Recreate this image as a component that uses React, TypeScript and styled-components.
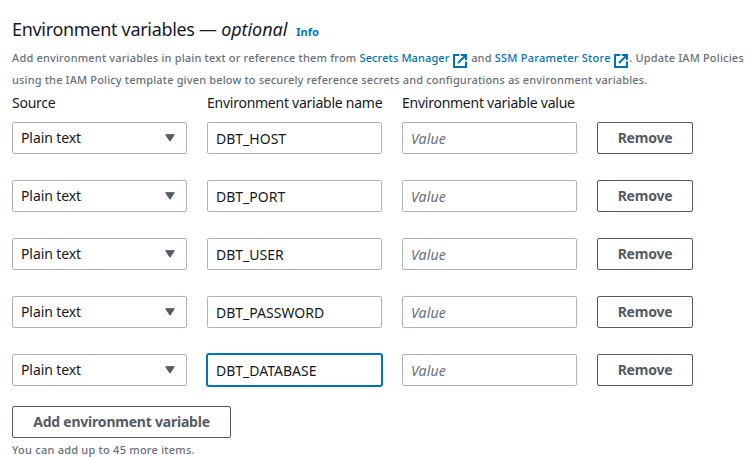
import React from 'react';
import styled, { createGlobalStyle, css } from 'styled-components';

const GlobalStyle = createGlobalStyle`
  *, *::before, *::after { box-sizing: border-box; }
  body {
    margin: 0;
    background: #fff;
    color: #16191f;
    font-family: "Noto Sans", "Open Sans", sans-serif;
    font-size: 14px;
    line-height: 22px;
  }
`;

const Page = styled.main`
  width: 755px;
  height: 457px;
  padding: 17px 0 0 12px;
  overflow: hidden;
`;

const Header = styled.header`
  display: flex;
  align-items: baseline;
  height: 24px;
`;

const Title = styled.h3`
  margin: 0;
  font-size: 18px;
  line-height: 24px;
  font-weight: 400;
  letter-spacing: -0.31px;
  white-space: pre;

  i { letter-spacing: -0.05px; }
`;

const InfoLink = styled.a`
  margin-left: 9px;
  color: #0073bb;
  font-size: 11px;
  font-weight: 700;
  text-decoration: none;
`;

const Description = styled.p`
  margin: 6px 0 0;
  color: #687078;
  font-size: 11px;
  font-weight: 500;
  line-height: 22px;
  white-space: nowrap;
`;

const Line = styled.span<{ $spacing: number }>`
  display: block;
  height: 22px;
  letter-spacing: ${({ $spacing }) => $spacing}px;
`;

const ExternalLink = styled.a<{ $spacing: number }>`
  color: #0073bb;
  letter-spacing: ${({ $spacing }) => $spacing}px;
  text-decoration: none;
`;

const ExternalGlyph = styled.svg`
  width: 16px;
  height: 16px;
  margin: 0 0.5px 0 2px;
  vertical-align: -7px;
  fill: none;
  stroke: currentColor;
  stroke-width: 2;
`;

const columns = css`
  display: grid;
  grid-template-columns: 175px 175px 175px 96px;
  column-gap: 20px;
`;

const Labels = styled.div`
  ${columns}
  margin: 1px 0 8px;
  letter-spacing: -0.25px;
  white-space: nowrap;
`;

const Rows = styled.div`
  display: grid;
  row-gap: 26px;
`;

const Row = styled.div`
  ${columns}
`;

const Select = styled.button`
  display: flex;
  align-items: center;
  justify-content: space-between;
  height: 32px;
  padding: 0 11px 0 8px;
  border: 1px solid #aab7b8;
  border-radius: 2px;
  background: #fff;
  color: #16191f;
  font: inherit;
  letter-spacing: -0.1px;
`;

const Caret = styled.svg`
  width: 10px;
  height: 8px;
  fill: #545b64;
  stroke: #545b64;
  stroke-linejoin: round;
`;

const Input = styled.input<{ $active?: boolean }>`
  width: 100%;
  min-width: 0;
  height: 32px;
  padding: 0 8px;
  border: 1px solid ${({ $active }) => ($active ? '#0073bb' : '#aab7b8')};
  border-radius: 2px;
  outline: none;
  box-shadow: ${({ $active }) => ($active ? '0 0 0 1px #0073bb' : 'none')};
  background: #fff;
  color: #16191f;
  font: inherit;

  &::placeholder {
    color: #687078;
    font-style: italic;
    letter-spacing: 0.15px;
    opacity: 1;
  }
`;

const Button = styled.button<{ $width: number }>`
  width: ${({ $width }) => $width}px;
  height: 32px;
  padding: 0;
  border: 1px solid #545b64;
  border-radius: 2px;
  background: #fff;
  color: #545b64;
  font: inherit;
  font-weight: 700;
  letter-spacing: -0.22px;
`;

const Footer = styled.footer`
  display: flex;
  flex-direction: column;
  align-items: flex-start;
  margin-top: 20px;
`;

const Hint = styled.small`
  margin-top: 4px;
  color: #687078;
  font-size: 11px;
  font-weight: 500;
  line-height: 16px;
  letter-spacing: 0.23px;
`;

const External = () => (
  <ExternalGlyph viewBox="0 0 16 16" aria-hidden="true">
    <path d="M14 8.5V14H2V2h5.5M9 2h5v5M6 10l7.5-7.5" />
  </ExternalGlyph>
);

const names = ['DBT_HOST', 'DBT_PORT', 'DBT_USER', 'DBT_PASSWORD', 'DBT_DATABASE'];

export default function App() {
  return (
    <Page>
      <GlobalStyle />
      <Header>
        <Title>Environment variables — <i>optional</i></Title>
        <InfoLink>Info</InfoLink>
      </Header>
      <Description>
        <Line $spacing={0.18}>
          Add environment variables in plain text or reference them from{' '}
          <ExternalLink $spacing={0.12}>Secrets Manager<External /></ExternalLink> and{' '}
          <ExternalLink $spacing={0.25}>SSM Parameter Store<External /></ExternalLink>. Update IAM Policies
        </Line>
        <Line $spacing={0.155}>
          using the IAM Policy template given below to securely reference secrets and configurations as environment variables.
        </Line>
      </Description>
      <Labels>
        <span>Source</span>
        <span>Environment variable name</span>
        <span>Environment variable value</span>
      </Labels>
      <Rows>
        {names.map((name) => (
          <Row key={name}>
            <Select type="button">
              Plain text
              <Caret viewBox="0 0 10 8" aria-hidden="true">
                <path d="M.7.7h8.6L5 7.2z" />
              </Caret>
            </Select>
            <Input defaultValue={name} spellCheck={false} $active={name === 'DBT_DATABASE'} />
            <Input placeholder="Value" />
            <Button type="button" $width={96}>Remove</Button>
          </Row>
        ))}
      </Rows>
      <Footer>
        <Button type="button" $width={219}>Add environment variable</Button>
        <Hint>You can add up to 45 more items.</Hint>
      </Footer>
    </Page>
  );
}
